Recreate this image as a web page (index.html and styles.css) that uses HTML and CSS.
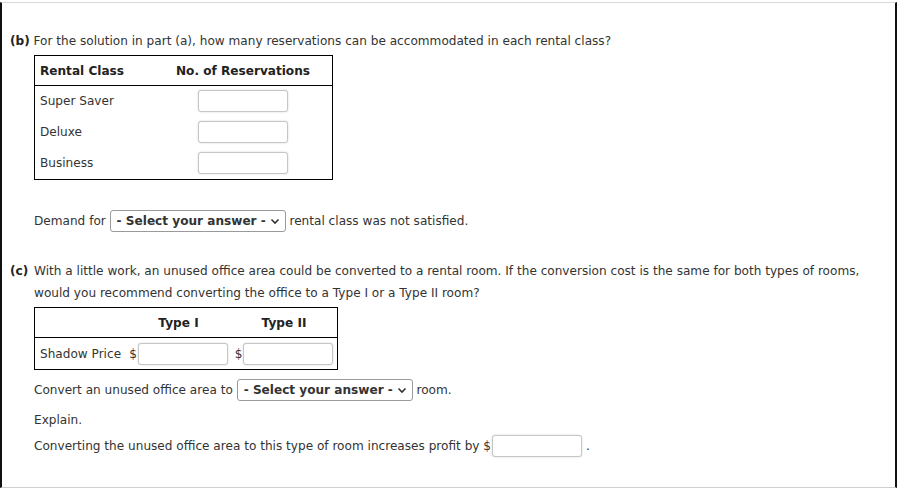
FILE: index.html
```html
<!DOCTYPE html>
<html>
<head>
<meta charset="utf-8">
<link rel="stylesheet" href="styles.css">
</head>
<body>
<div class="frame">
  <p class="q"><b>(b)</b> For the solution in part (a), how many reservations can be accommodated in each rental class?</p>
  <div class="indent">
    <table class="t1">
      <tr class="head"><th class="c1">Rental Class</th><th class="c2">No. of Reservations</th></tr>
      <tr><td class="c1">Super Saver</td><td class="c2"><span class="inp w91"></span></td></tr>
      <tr><td class="c1">Deluxe</td><td class="c2"><span class="inp w91"></span></td></tr>
      <tr><td class="c1">Business</td><td class="c2"><span class="inp w91"></span></td></tr>
    </table>
    <div class="line demand">Demand for <span class="sel"><span>- Select your answer -</span><svg width="10" height="7" viewBox="0 0 10 7"><path d="M1.5 1.5 L5 5 L8.5 1.5" fill="none" stroke="#333" stroke-width="1.6"/></svg></span> rental class was not satisfied.</div>
  </div>
  <div class="qc">
    <b class="lbl">(c)</b>
    <div class="qtext">
      <p class="para">With a little work, an unused office area could be converted to a rental room. If the conversion cost is the same for both types of rooms, would you recommend converting the office to a Type I or a Type II room?</p>
      <table class="t2">
        <tr class="head"><th class="d1"></th><th class="d2">Type I</th><th class="d3">Type II</th></tr>
        <tr><td class="d1">Shadow Price</td><td class="d2"><span class="dol">$</span><span class="inp w90"></span></td><td class="d3"><span class="dol">$</span><span class="inp w90"></span></td></tr>
      </table>
      <div class="line convert">Convert an unused office area to <span class="sel"><span>- Select your answer -</span><svg width="10" height="7" viewBox="0 0 10 7"><path d="M1.5 1.5 L5 5 L8.5 1.5" fill="none" stroke="#333" stroke-width="1.6"/></svg></span> room.</div>
      <div class="line explain">Explain.</div>
      <div class="line profit">Converting the unused office area to this type of room increases profit by $<span class="inp w91"></span> .</div>
    </div>
  </div>
</div>
</body>
</html>
```

FILE: styles.css
```css
html, body {
  margin: 0;
  padding: 0;
  background: #fff;
}
body {
  font-family: "DejaVu Sans", Verdana, sans-serif;
  font-size: 12.1px;
  color: #333;
}
.frame {
  margin-top: 2px;
  width: 885px;
  height: 457px;
  border-top: 1px solid #d8d8d8;
  border-bottom: 1px solid #cfcfcf;
  border-left: 2px solid #111;
  border-right: 2px solid #111;
  padding-top: 27px;
  padding-left: 8px;
}
p { margin: 0; }
.q {
  line-height: 22px;
}
b { color: #222; }
.indent {
  padding-left: 24px;
  margin-top: 3px;
}
table {
  border-collapse: collapse;
  border: 1px solid #000;
}
th, td { padding: 0; }
.t1 th {
  height: 29px;
  border-bottom: 1px solid #000;
  font-weight: bold;
  color: #222;
  vertical-align: middle;
}
.t1 .c1 { width: 114px; text-align: left; padding-left: 5px; }
.t1 .c2 { width: 178px; text-align: center; }
.t1 td { height: 31px; vertical-align: top; }
.t1 td.c1 { line-height: 30px; }
.t1 td.c2 { padding-top: 4px; box-sizing: border-box; }
.inp {
  display: inline-block;
  vertical-align: middle;
  height: 20px;
  border: 1px solid #c6c6c6;
  border-radius: 3px;
  box-shadow: 0 0 2px rgba(0,0,0,0.18);
  background: #fff;
}
.w91 { width: 88px; }
.w90 { width: 88px; }
.t1 td.c2 .inp { display: block; margin: 0 auto; }
.line {
  display: flex;
  align-items: center;
  height: 22px;
  white-space: pre;
}
.demand { margin-top: 30px; }
.sel {
  display: inline-flex;
  align-items: center;
  justify-content: space-between;
  box-sizing: border-box;
  width: 176px;
  height: 22px;
  border: 1px solid #9a9a9a;
  border-radius: 3px;
  padding: 0 5px 0 6px;
  font-weight: bold;
  color: #333;
}
.sel svg { flex: none; display: block; }
.qc {
  display: flex;
  margin-top: 28px;
}
.lbl {
  width: 24px;
  line-height: 22px;
  flex: none;
}
.para { line-height: 22px; width: 840px; }
.t2 { margin-top: 3px; }
.t2 th {
  height: 29px;
  border-bottom: 1px solid #000;
  font-weight: bold;
  color: #222;
  text-align: center;
}
.t2 .d1 { width: 86px; text-align: left; padding-left: 5px; }
.t2 .d2 { width: 105px; text-align: center; }
.t2 .d3 { width: 106px; text-align: center; }
.t2 td { height: 31px; }
.dol { display: inline-block; vertical-align: middle; margin-right: 1px; }
.convert { margin-top: 9px; }
.explain { margin-top: 8px; }
.profit { margin-top: 4px; }
.profit .inp { margin: 0 0 0 1px; }
```
